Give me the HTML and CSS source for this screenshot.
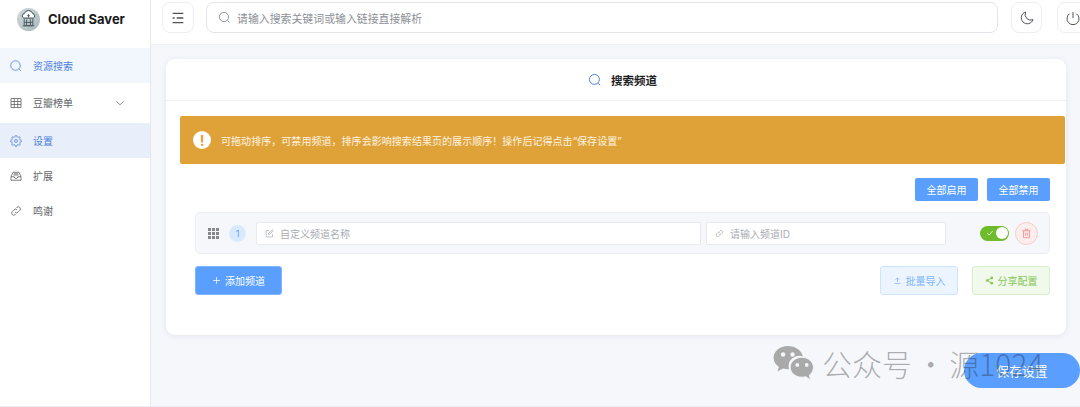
FILE: index.html
```html
<!DOCTYPE html>
<html lang="zh">
<head>
<meta charset="utf-8">
<title>Cloud Saver</title>
<link rel="stylesheet" href="styles.css">
</head>
<body>
<div class="app">
  <aside class="sidebar">
    <div class="brand">
      <svg class="logo" viewBox="0 0 24 24"><defs><linearGradient id="lg" x1="0" y1="0" x2="1" y2="1"><stop offset="0" stop-color="#cfd8da"/><stop offset="1" stop-color="#a9b9bb"/></linearGradient></defs><circle cx="12" cy="12" r="12" fill="url(#lg)"/><path d="M7 10.500a2.400 2.400 0 0 1 .6-4.600 4.600 4.600 0 0 1 8.800 0 2.400 2.400 0 0 1 .6 4.600z" fill="#fff" stroke="#33424a" stroke-width="1"/><path d="M12 10V7m-1.300 1.200L12 7l1.300 1.200" fill="none" stroke="#33424a" stroke-width=".9"/><path d="M7.500 11.500v7h9v-7M7.500 15h9M10 12v6M14 12v6M6 18.500h12" fill="none" stroke="#4a5a60" stroke-width="1"/></svg>
      <span class="brand-name">Cloud Saver</span>
    </div>
    <nav class="menu">
      <a class="item active-soft"><svg class="ic" viewBox="0 0 24 24"><circle cx="11" cy="11" r="9.500"/><path d="M18 18l4 4"/></svg><span>资源搜索</span></a>
      <a class="item"><svg class="ic" viewBox="0 0 24 24"><path d="M2 3h20v18H2zM8.500 3v18M15.500 3v18M2 9h20M2 15h20"/></svg><span>豆瓣榜单</span><svg class="chev" viewBox="0 0 16 10"><path d="M2 2l6 6 6-6"/></svg></a>
      <a class="item active"><svg class="ic" viewBox="0 0 24 24"><circle cx="12" cy="12" r="3"/><path d="M19.400 15a1.650 1.650 0 0 0 .33 1.820l.06.06a2 2 0 1 1-2.830 2.830l-.06-.06a1.650 1.650 0 0 0-1.820-.33 1.650 1.650 0 0 0-1 1.510V21a2 2 0 0 1-4 0v-.09A1.650 1.650 0 0 0 9 19.400a1.650 1.650 0 0 0-1.820.33l-.06.06a2 2 0 1 1-2.830-2.830l.06-.06a1.650 1.650 0 0 0 .33-1.820 1.650 1.650 0 0 0-1.510-1H3a2 2 0 0 1 0-4h.09A1.650 1.650 0 0 0 4.600 9a1.650 1.650 0 0 0-.33-1.820l-.06-.06a2 2 0 1 1 2.830-2.830l.06.06a1.650 1.650 0 0 0 1.820.33H9a1.650 1.650 0 0 0 1-1.510V3a2 2 0 0 1 4 0v.09a1.650 1.650 0 0 0 1 1.510 1.650 1.650 0 0 0 1.820-.33l.06-.06a2 2 0 1 1 2.830 2.830l-.06.06a1.650 1.650 0 0 0-.33 1.820V9a1.650 1.650 0 0 0 1.510 1H21a2 2 0 0 1 0 4h-.09a1.650 1.650 0 0 0-1.510 1z"/></svg><span>设置</span></a>
      <a class="item"><svg class="ic" viewBox="0 0 24 24"><path d="M2 13.500 6 4.500h12l4 9v7H2zM2 13.500h6.500a3.500 3.500 0 0 0 7 0H22M7 10h10M8 7.500h8"/></svg><span>扩展</span></a>
      <a class="item"><svg class="ic" viewBox="0 0 24 24"><path d="M10 14a4 4 0 0 0 6 .4l3.500-3.500a4.200 4.200 0 0 0-6-6L12 6.400"/><path d="M14 10a4 4 0 0 0-6-.4l-3.500 3.500a4.200 4.200 0 0 0 6 6l1.500-1.500"/></svg><span>鸣谢</span></a>
    </nav>
  </aside>
  <div class="main">
    <header class="topbar">
      <button class="tool first"><svg class="tool-ic" viewBox="0 0 24 24"><path d="M4 5h16M10 12h10M4 19h16M4 12h3"/></svg></button>
      <div class="search"><svg class="search-ic" viewBox="0 0 24 24"><circle cx="11" cy="11" r="8.500"/><path d="M17.500 17.500 21 21"/></svg><span>请输入搜索关键词或输入链接直接解析</span></div>
      <button class="tool"><svg class="tool-ic thin" viewBox="0 0 24 24"><path d="M10 3a9 9 0 1 0 11 11.500A8.500 8.500 0 0 1 10 3z"/></svg></button>
      <button class="tool last"><svg class="tool-ic thin" viewBox="0 0 24 24"><path d="M12 3v9M7 5.500a9 9 0 1 0 10 0"/></svg></button>
    </header>
    <main class="content">
      <section class="card">
        <div class="card-head"><svg class="title-ic" viewBox="0 0 24 24"><circle cx="11" cy="11" r="8.500"/><path d="M17.500 17.500 21 21"/></svg><h2>搜索频道</h2></div>
        <div class="card-body">
          <div class="alert"><span class="alert-ic">!</span><span>可拖动排序，可禁用频道，排序会影响搜索结果页的展示顺序！操作后记得点击“保存设置”</span></div>
          <div class="bulk">
            <button class="btn primary">全部启用</button>
            <button class="btn primary">全部禁用</button>
          </div>
          <div class="channel">
            <svg class="grip" viewBox="0 0 11 11"><path d="M0 0h3v3H0zM4 0h3v3H4zM8 0h3v3H8zM0 4h3v3H0zM4 4h3v3H4zM8 4h3v3H8zM0 8h3v3H0zM4 8h3v3H4zM8 8h3v3H8z"/></svg>
            <span class="num">1</span>
            <div class="field name"><svg class="field-ic" viewBox="0 0 24 24"><path d="M20 13v8H3V4h8M9 15l1-4L20 2l2 2-9 10z"/></svg><span>自定义频道名称</span></div>
            <div class="field cid"><svg class="field-ic" viewBox="0 0 24 24"><path d="M10 14a4 4 0 0 0 6 .4l3.500-3.500a4.200 4.200 0 0 0-6-6L12 6.400"/><path d="M14 10a4 4 0 0 0-6-.4l-3.500 3.500a4.200 4.200 0 0 0 6 6l1.500-1.500"/></svg><span>请输入频道ID</span></div>
            <span class="switch"><svg class="check" viewBox="0 0 12 10"><path d="M1.500 5.500l3 3 6-7"/></svg><i class="knob"></i></span>
            <span class="del"><svg class="del-ic" viewBox="0 0 24 24"><path d="M3 6h18M9 6V3h6v3M5.500 6v15h13V6M10 10v7M14 10v7"/></svg></span>
          </div>
          <div class="actions">
            <button class="btn primary add"><svg class="btn-ic" viewBox="0 0 24 24"><path d="M12 3v18M3 12h18"/></svg>添加频道</button>
            <div class="spacer"></div>
            <button class="btn soft-blue"><svg class="btn-ic" viewBox="0 0 24 24"><path d="M12 16V5M7 10l5-5 5 5M4 20h16"/></svg>批量导入</button>
            <button class="btn soft-green"><svg class="btn-ic fill" viewBox="0 0 24 24"><circle cx="18" cy="5" r="3.500"/><circle cx="18" cy="19" r="3.500"/><circle cx="6" cy="12" r="3.500"/><path d="M6 12 18 5M6 12l12 7" fill="none" stroke="currentColor" stroke-width="2.500"/></svg>分享配置</button>
          </div>
        </div>
      </section>
    </main>
  </div>
</div>
<button class="save">保存设置</button>
<div class="watermark">
  <svg class="wechat" viewBox="0 0 44 38"><path d="M16 1C7.500 1 1 6.700 1 13.500c0 4 2.200 7.300 5.600 9.600L5 28l6-3.200c1.700.5 3.300.7 5 .7h1.300A11 11 0 0 1 32 12.200C30.500 5.700 24 1 16 1z" fill="#a9a9a9"/><path d="M43 23.500C43 17.700 37.500 13 30.800 13S18.500 17.700 18.500 23.500 24 34 30.800 34c1.400 0 2.800-.2 4.100-.6L40 37l-1.300-5.100c2.700-1.900 4.300-4.900 4.300-8.400z" fill="#a9a9a9" stroke="#f5f7fb" stroke-width="1"/><circle cx="11" cy="10" r="2.300" fill="#f5f7fb"/><circle cx="21" cy="10" r="2.300" fill="#f5f7fb"/><circle cx="26" cy="21" r="2" fill="#f5f7fb"/><circle cx="36" cy="21" r="2" fill="#f5f7fb"/></svg>
  <span class="wm-text">公众号 · 源1024</span>
</div>
</body>
</html>
```

FILE: styles.css
```css
* { box-sizing: border-box; }
html, body { margin: 0; height: 407px; overflow: hidden; }
body { font-family: "Inter", "Noto Sans CJK SC", sans-serif; font-size: 10px; color: #606266; background: #f5f7fb; }
.app { display: flex; height: 407px; width: 1080px; overflow: hidden; border-bottom: 1px solid #eceef3; }
.sidebar { flex: 0 0 151px; background: #fff; border-right: 1px solid #e4e7ed; }
.brand { display: flex; align-items: center; height: 48px; padding: 0 0 10px 17px; gap: 8px; }
.logo { width: 23px; height: 23px; }
.brand-name { font-size: 13px; font-weight: 700; color: #1a1a1a; }
.menu { display: flex; flex-direction: column; }
.item { display: flex; align-items: center; height: 35px; padding-left: 10px; gap: 11px; color: #606266; }
.item.active-soft { background: #f2f6fd; color: #4b80dc; }
.item.active { background: #e8effa; color: #4b80dc; margin-top: 1px; }
.item:nth-child(2) { height: 39px; }
.ic { width: 12px; height: 12px; fill: none; stroke: currentColor; stroke-width: 1.600; flex: none; }
.chev { width: 10px; height: 6px; margin-left: 31px; fill: none; stroke: #606266; stroke-width: 1.300; }
.main { flex: 1; min-width: 0; display: flex; flex-direction: column; }
.topbar { height: 45px; display: flex; align-items: center; gap: 12px; background: #fff; padding: 0 0 9px 11px; width: 941px; flex: none; border-bottom: 1px solid #eef0f5; }
.tool { flex: none; width: 31px; height: 31px; padding: 0; background: #fff; border: 1px solid #eceef2; border-radius: 8px; display: flex; align-items: center; justify-content: center; color: #4f5257; }
.tool.first { width: 32px; }
.tool.last { margin-left: 3px; }
.tool-ic { width: 16px; height: 16px; fill: none; stroke: currentColor; stroke-width: 2; }
.tool-ic.thin { stroke-width: 1.500; }
.search { width: 792px; flex: none; height: 31px; display: flex; align-items: center; gap: 6px; padding-left: 11px; border: 1px solid #e1e4ea; border-radius: 8px; color: #8c8f96; font-size: 10.900px; margin-right: 1px; }
.search-ic { width: 13px; height: 13px; fill: none; stroke: #777b82; stroke-width: 1.500; }
.content { padding: 14px 14px 0 15px; }
.card { height: 276px; background: #fff; border-radius: 9px; box-shadow: 0 1px 6px rgba(40, 60, 100, .09); }
.card-head { height: 42px; display: flex; align-items: center; justify-content: center; gap: 9px; padding-left: 13px; border-bottom: 1px solid #f0f1f4; }
.card-head h2 { margin: 0; font-size: 11.500px; font-weight: 700; color: #1f1f1f; }
.title-ic { width: 14px; height: 14px; fill: none; stroke: #4b80dc; stroke-width: 1.700; }
.card-body { padding: 15px 1px 0 14px; }
.alert { height: 48px; background: #dfa238; border-radius: 2px; display: flex; align-items: center; gap: 10px; padding-left: 13px; color: #fdf4e2; font-size: 10.050px; }
.alert-ic { width: 18px; height: 18px; border-radius: 50%; background: #fff; color: #dfa238; font-weight: 700; font-size: 14px; display: flex; align-items: center; justify-content: center; }
.bulk { display: flex; justify-content: flex-end; gap: 9px; padding: 14px 15px 11px 0; }
.btn { display: inline-flex; align-items: center; justify-content: center; border-radius: 2px; font: inherit; border: 1px solid transparent; padding: 0; }
.primary { background: #5a9fff; color: #fff; height: 23px; width: 63px; }
.channel { margin: 0 15px; height: 42px; background: #f5f7fb; border: 1px solid #ebedf2; border-radius: 5px; display: flex; align-items: center; padding-left: 12px; }
.grip { width: 11px; height: 11px; fill: #85878b; flex: none; }
.num { flex: none; width: 17px; height: 17px; margin-left: 10px; border-radius: 50%; background: #d9eaff; color: #5a9fff; display: flex; align-items: center; justify-content: center; font-size: 9px; }
.field { flex: none; background: #fff; height: 23px; border: 1px solid #e8eaef; border-radius: 2px; display: flex; align-items: center; color: #a8abb2; gap: 6px; padding-left: 8px; }
.field.name { width: 445px; margin-left: 10px; }
.field.cid { width: 240px; margin-left: 5px; }
.field-ic { width: 9px; height: 9px; fill: none; stroke: #aeb1b7; stroke-width: 2; flex: none; }
.switch { flex: none; margin-left: 34px; width: 29px; height: 15px; border-radius: 8px; background: #6ebb2c; display: flex; align-items: center; justify-content: space-between; padding: 0 1.500px 0 6px; }
.check { width: 8px; height: 6px; fill: none; stroke: #fff; stroke-width: 1.300; }
.knob { width: 12px; height: 12px; border-radius: 50%; background: #fff; }
.del { flex: none; margin-left: 6px; width: 23px; height: 23px; border-radius: 50%; background: #fdeeee; border: 1px solid #f8c9c9; display: flex; align-items: center; justify-content: center; }
.del-ic { width: 11px; height: 11px; fill: none; stroke: #f28c8c; stroke-width: 1.800; }
.actions { display: flex; align-items: center; margin: 12px 15px 0; gap: 14px; }
.spacer { flex: 1; }
.btn-ic { width: 9px; height: 9px; fill: none; stroke: currentColor; stroke-width: 2; margin-right: 4px; }
.btn-ic.fill { fill: currentColor; stroke: none; }
.add { width: 87px; height: 29px; border-radius: 3px; border-color: #7fb5ff; }
.soft-blue, .soft-green { width: 78px; height: 29px; border-radius: 3px; }
.soft-blue { background: #ecf5ff; border-color: #cfe4ff; color: #7eb4fb; }
.soft-green { background: #f0f9eb; border-color: #d9edc9; color: #85c556; }
.save { position: absolute; left: 964px; top: 353px; width: 116px; height: 35px; border: 0; border-radius: 18px; background: #5a9fff; color: #fff; font: inherit; font-size: 12.750px; padding: 0; }
.watermark { position: absolute; left: 772px; top: 344px; display: flex; align-items: center; gap: 7px; pointer-events: none; }
.wechat { width: 43px; height: 36px; }
.wm-text { font-size: 30px; line-height: 38px; color: rgba(30, 30, 30, .36); font-family: "Noto Sans CJK SC", sans-serif; font-weight: 300; white-space: nowrap; word-spacing: -3px; }
```
